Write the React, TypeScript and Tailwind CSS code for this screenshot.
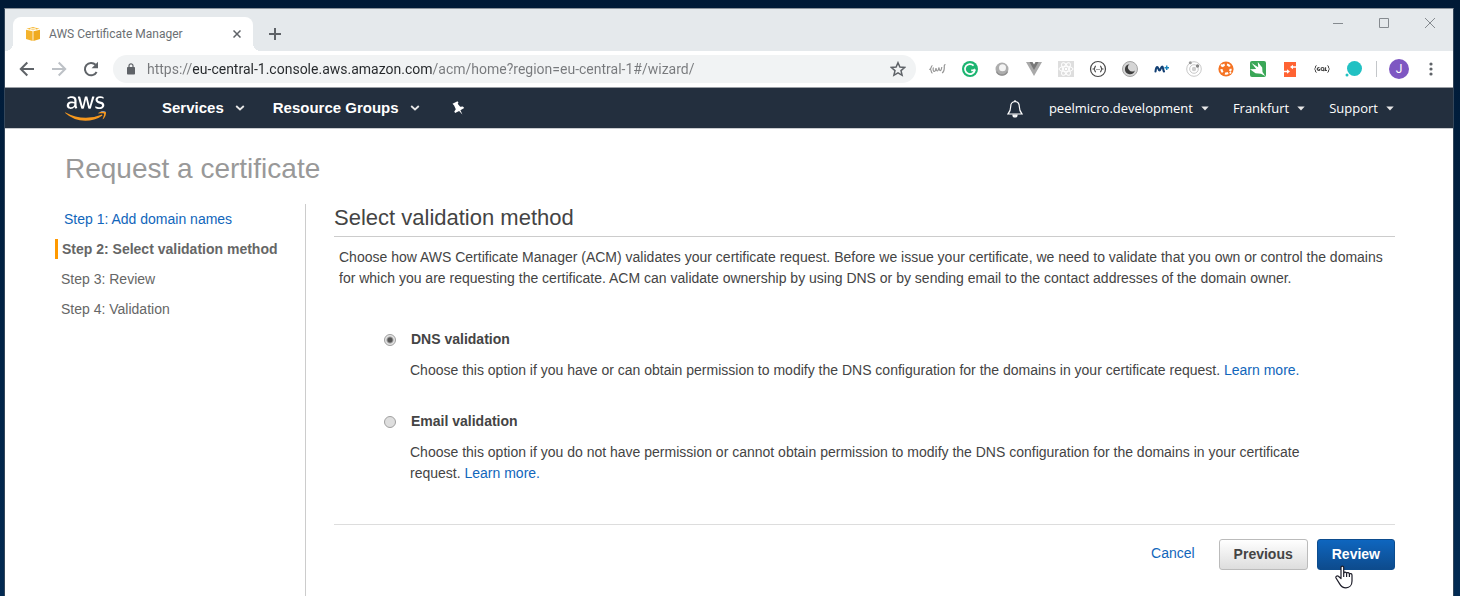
import React, { useState } from "react";
import { FaAws } from "react-icons/fa6";

type Ext = { name: string; art: React.ReactNode };

const extensions: Ext[] = [
  {
    name: "Emmet",
    art: (
      <g fill="none" stroke="#979797" strokeWidth="1.200">
        <path d="M3.500 5.500c-1.800.4-.6 3-2.500 3.700 1.900.3.500 3.500 2.500 4M16.500 4.500c-1.800 0-1 2.500-1.300 4.500-.3 2-.5 3.500-2.200 3.800" />
        <path d="M4.500 7.500c-.8 1.500-.3 4 .8 4s1.500-2 1.700-3.500c.3 2 .6 3 1.400 3s1.100-2 1.600-3.500c.2 2 .5 3.200 1.300 3.200s1.200-1.500 1.500-3.700" />
      </g>
    ),
  },
  {
    name: "Grammarly",
    art: (
      <>
        <circle cx="9" cy="9" r="8" fill="#1cb571" />
        <path d="M12.600 5.600A5 5 0 1 0 13.800 10.400H10.200" fill="none" stroke="#fff" strokeWidth="1.700" />
        <path d="M13.800 8.200v4.200l-2.400-2z" fill="#fff" />
      </>
    ),
  },
  {
    name: "Lens",
    art: (
      <>
        <circle cx="9" cy="9" r="6.500" fill="#adadad" />
        <path d="M3.500 11.500a6 6 0 0 0 11 0" fill="none" stroke="#8e8e8e" strokeWidth="1.500" />
        <circle cx="9.500" cy="7.800" r="3.500" fill="#f4f4f4" />
      </>
    ),
  },
  {
    name: "Vue devtools",
    art: (
      <>
        <path d="M1 2h4.500L9 8l3.500-6H17L9 16z" fill="#a9a9a9" />
        <path d="M4.500 2h3L9 4.600 10.500 2h3L9 10z" fill="#777" />
      </>
    ),
  },
  {
    name: "React devtools",
    art: (
      <>
        <rect x="1" y="1" width="16" height="16" fill="#dedede" />
        <g fill="none" stroke="#fff" strokeWidth="1">
          <ellipse cx="9" cy="9" rx="7" ry="2.700" />
          <ellipse cx="9" cy="9" rx="7" ry="2.700" transform="rotate(60 9 9)" />
          <ellipse cx="9" cy="9" rx="7" ry="2.700" transform="rotate(120 9 9)" />
        </g>
        <circle cx="9" cy="9" r="1.200" fill="#fff" />
      </>
    ),
  },
  {
    name: "JSON viewer",
    art: (
      <g fill="none" stroke="#4a4a4a">
        <circle cx="9" cy="9" r="7.500" strokeWidth="1.200" />
        <path d="M7 6c-1.800 0-.5 2.500-2.300 3C6.500 9.500 5.200 12 7 12M11 6c1.800 0 .5 2.500 2.300 3-1.800.5-.5 3-2.300 3" strokeWidth="1.200" />
        <path d="M7.500 9.500h3" strokeWidth="1" strokeDasharray="1 1" />
      </g>
    ),
  },
  {
    name: "Dark mode",
    art: (
      <>
        <circle cx="9" cy="9" r="7.500" fill="#d5d5d5" stroke="#a5a5a5" />
        <path d="M8.500 4.200a5 5 0 1 0 5.300 6.200A4 4 0 0 1 8.500 4.200z" fill="#3d3d3d" />
      </>
    ),
  },
  {
    name: "Movistar",
    art: (
      <>
        <path d="M2.500 11.500c.3-2.600 1-4.500 1.800-4.500.9 0 1.200 3.500 2.200 3.500S8 6.500 9.200 6.500s.6 3.500 1.800 5" fill="none" stroke="#123f73" strokeWidth="2.100" strokeLinecap="round" />
        <path d="M13.700 5.500v4.500M11.500 7.700H16" stroke="#1b86bd" strokeWidth="1.500" />
      </>
    ),
  },
  {
    name: "Orbit",
    art: (
      <>
        <g fill="none" stroke="#c9c9c9">
          <circle cx="9" cy="9" r="7.300" />
          <circle cx="9" cy="9" r="4.300" />
        </g>
        <circle cx="9" cy="9" r="2.200" fill="#cfcfcf" />
        <circle cx="12.500" cy="6" r="1.700" fill="#858585" />
        <circle cx="5.300" cy="2.800" r="1.500" fill="#999" />
      </>
    ),
  },
  {
    name: "Hub",
    art: (
      <>
        <circle cx="9" cy="9" r="7.600" fill="#f57323" />
        <circle cx="9" cy="9" r="4.600" fill="none" stroke="#fff" strokeWidth="2.200" strokeDasharray="3.400 2.380" strokeDashoffset="1" />
        <circle cx="4.600" cy="5.300" r="1" fill="#fff" />
        <circle cx="13.400" cy="12.700" r="1" fill="#fff" />
      </>
    ),
  },
  {
    name: "Swift",
    art: (
      <>
        <rect x="1" y="1" width="16" height="16" rx="2" fill="#3aa757" />
        <path d="M1 9.300l6.200-.4L2.500 3l6.700 4.300L8.800 2l4.400 5.500.3 4.500 2.700 4-4.200-2.300-5.500-.4z" fill="#fff" />
      </>
    ),
  },
  {
    name: "Switcher",
    art: (
      <>
        <rect x="3" y="2" width="12" height="15" fill="#ff6333" />
        <path d="M3 11.500h4M15 7h-4" stroke="#fff" strokeWidth="1.300" />
        <path d="M6 9.200l3 2.300-3 2.300zM12 4.700L9 7l3 2.300z" fill="#fff" />
      </>
    ),
  },
  {
    name: "GraphQL",
    art: (
      <g fill="none" stroke="#444" strokeWidth="1">
        <path d="M3.500 5.500c-1.700 0-.3 3-2 3.500 1.700.5.300 3.500 2 3.500M14.500 5.500c1.700 0 .3 3 2 3.500-1.700.5-.3 3.500-2 3.500" />
        <path d="M6.500 7.800c-3-1-3 3.400 0 2.400V9M12.500 7.200v3.300h1.500M10.300 10l1 1" strokeWidth="1.200" />
        <circle cx="9.500" cy="9" r="1.500" strokeWidth="1.200" />
      </g>
    ),
  },
  {
    name: "Chat bubble",
    art: (
      <g fill="#22c1c3">
        <circle cx="9.500" cy="8.500" r="7.500" />
        <circle cx="2" cy="15" r="1.500" />
      </g>
    ),
  },
];

const Caret = ({ wide = false }: { wide?: boolean }) =>
  wide ? (
    <svg viewBox="0 0 10 6" className="h-[6px] w-[10px]" fill="none" stroke="#e8e8e8" strokeWidth="1.800">
      <path d="M1.200 1L5 4.500 8.800 1" />
    </svg>
  ) : (
    <svg viewBox="0 0 8 5" className="h-[5px] w-2" fill="#e8e8e8">
      <path d="M.3.500h7.400L4 4.500z" />
    </svg>
  );

const IconButton = ({ label, children }: { label: string; children: React.ReactNode }) => (
  <button aria-label={label} className="flex h-8 w-8 shrink-0 items-center justify-center">
    {children}
  </button>
);

function TabStrip() {
  return (
    <div className="flex h-[42px] items-end justify-between bg-[#e5e9ec]">
      <div className="flex items-end">
        <span className="h-2 w-2 bg-[radial-gradient(circle_at_0_0,#e5e9ec_8px,#fff_8px)]" />
        <div className="flex h-[34px] w-60 items-center rounded-t-lg bg-white pr-3 pl-3">
          <svg viewBox="0 0 16 16" className="h-4 w-4 shrink-0">
            <path d="M1 3.800l6.600 1.400V15L1 13z" fill="#f4b32c" />
            <path d="M15 3.800L8.400 5.200V15L15 13z" fill="#efaa20" />
            <path d="M1.500 2.800L8 1l6.500 1.800L8 4.300z" fill="#f6b833" />
            <path d="M5 2l6 1.700M11 2L5 3.700" stroke="#fff" strokeWidth=".7" />
          </svg>
          <span className="ml-2 flex-1 font-[Roboto,'Noto_Sans',sans-serif] text-xs whitespace-nowrap text-[#6b6f73]">
            AWS Certificate Manager
          </span>
          <button aria-label="Close tab">
            <svg viewBox="0 0 8 8" className="h-2 w-2" stroke="#5f6368" strokeWidth="1.500">
              <path d="M.5.500l7 7M7.500.500l-7 7" />
            </svg>
          </button>
        </div>
        <span className="h-2 w-2 bg-[radial-gradient(circle_at_100%_0,#e5e9ec_8px,#fff_8px)]" />
        <button aria-label="New tab" className="flex h-[34px] w-7 items-center justify-center">
          <svg viewBox="0 0 12 12" className="h-3 w-3" stroke="#5f6368" strokeWidth="2">
            <path d="M6 0v12M0 6h12" />
          </svg>
        </button>
      </div>
      <div className="flex self-start pt-[9px] pr-[18px] text-[#858a8f]">
        <button aria-label="Minimize" className="mr-9">
          <svg viewBox="0 0 10 10" className="h-[10px] w-[10px]" stroke="currentColor"><path d="M0 5.500h10" /></svg>
        </button>
        <button aria-label="Maximize" className="mr-9">
          <svg viewBox="0 0 10 10" className="h-[10px] w-[10px]" fill="none" stroke="currentColor"><path d="M.5.500h9v9h-9z" /></svg>
        </button>
        <button aria-label="Close window">
          <svg viewBox="0 0 10 10" className="h-[10px] w-[10px]" stroke="currentColor"><path d="M0 0l10 10M10 0L0 10" /></svg>
        </button>
      </div>
    </div>
  );
}

function Toolbar() {
  return (
    <div className="flex h-[37px] items-center border-b border-[#9b9fa5] bg-white px-1.5">
      <IconButton label="Back">
        <svg viewBox="0 0 16 16" className="h-4 w-4" fill="none" stroke="#5f6368" strokeWidth="2"><path d="M15 8H2M8.300 1.500L1.800 8l6.500 6.500" /></svg>
      </IconButton>
      <IconButton label="Forward">
        <svg viewBox="0 0 16 16" className="h-4 w-4" fill="none" stroke="#bdc1c6" strokeWidth="2"><path d="M1 8h13M7.700 1.500L14.200 8l-6.500 6.500" /></svg>
      </IconButton>
      <IconButton label="Reload">
        <svg viewBox="0 0 16 16" className="h-4 w-4">
          <path d="M13.600 11A6.200 6.200 0 1 1 12.600 3.800" fill="none" stroke="#5f6368" strokeWidth="2" />
          <path d="M15 .8v6.400H8.600z" fill="#5f6368" />
        </svg>
      </IconButton>
      <div className="ml-1.5 flex h-7 flex-1 items-center rounded-full bg-[#f1f3f4] pr-2.5 pl-3.5">
        <svg viewBox="0 0 8 12" className="h-3 w-2">
          <rect y="4" width="8" height="7.500" rx=".8" fill="#5f6368" />
          <path d="M2 4.500V2.800a2 2 0 0 1 4 0v1.700" fill="none" stroke="#5f6368" strokeWidth="1.200" />
        </svg>
        <input
          aria-label="Address"
          readOnly
          value="https://eu-central-1.console.aws.amazon.com/acm/home?region=eu-central-1#/wizard/"
          className="ml-3 min-w-0 flex-1 bg-[linear-gradient(90deg,#77797c_45px,#25282b_45px,#25282b_285px,#77797c_285px)] bg-clip-text font-[Roboto,'Noto_Sans',sans-serif] text-sm text-transparent outline-none"
        />
        <button aria-label="Bookmark this page">
          <svg viewBox="0 0 16 16" className="h-4 w-4" fill="none" stroke="#5f6368" strokeWidth="1.500">
            <path d="M8 1.700l1.900 4.400 4.700.4-3.600 3.100 1.100 4.700L8 11.800l-4.100 2.500L5 9.600 1.400 6.500l4.700-.4z" />
          </svg>
        </button>
      </div>
      <div className="ml-1.5 flex items-center">
        {extensions.map((e) => (
          <IconButton key={e.name} label={e.name}>
            <svg viewBox="0 0 18 18" className="h-[18px] w-[18px]">{e.art}</svg>
          </IconButton>
        ))}
      </div>
      <span className="mx-1.5 h-4 w-px bg-[#c4c7ca]" />
      <IconButton label="Profile">
        <span className="flex h-5 w-5 items-center justify-center rounded-full bg-[#7e57c2] font-[Roboto,sans-serif] text-xs text-white">J</span>
      </IconButton>
      <IconButton label="Menu">
        <svg viewBox="0 0 4 14" className="h-[14px] w-1" fill="#5f6368">
          <circle cx="2" cy="2" r="1.600" />
          <circle cx="2" cy="7" r="1.600" />
          <circle cx="2" cy="12" r="1.600" />
        </svg>
      </IconButton>
    </div>
  );
}

function ConsoleNav() {
  return (
    <nav className="flex h-[41px] items-center justify-between border-b border-[#c9cbce] bg-[#232f3e] pr-[59px] pl-[60px] text-white">
      <div className="flex items-center text-[15px] font-bold">
        <svg className="absolute h-0 w-0" aria-hidden="true">
          <linearGradient id="aws-fill" gradientUnits="userSpaceOnUse" x1="0" y1="0" x2="0" y2="512">
            <stop offset=".62" stopColor="#fff" />
            <stop offset=".62" stopColor="#f7981d" />
          </linearGradient>
        </svg>
        <a href="#home" aria-label="AWS">
          <FaAws className="h-[33px] w-[41px]" fill="url(#aws-fill)" stroke="none" />
        </a>
        <button className="ml-14 flex items-center gap-[11px]">Services <Caret wide /></button>
        <button className="ml-7 flex items-center gap-[11px]">Resource Groups <Caret wide /></button>
        <button aria-label="Pin shortcuts" className="ml-[31px]">
          <svg viewBox="0 0 14 14" className="h-[14px] w-[14px]" fill="#fff">
            <path d="M1.500 2.800L6.500.3l1 1.500-.8.900 2.500 3 2.700-.3 1.300 1.700-3.800 2.200 2 4.200-3.300-3.500-4 2-.8-1.600 1.500-2.100-1.700-3.700z" />
          </svg>
        </button>
      </div>
      <div className="flex items-center pt-px font-['Open_Sans','Noto_Sans',sans-serif] text-[13px]">
        <button aria-label="Notifications" className="mr-[26px]">
          <svg viewBox="0 0 16 18" className="h-[18px] w-4" fill="none" stroke="#fff" strokeWidth="1.200">
            <path d="M8 1.500c-3 .3-4.300 2.500-4.300 5 0 4-1 5.500-2.700 7.500h14c-1.700-2-2.700-3.500-2.700-7.500 0-2.500-1.300-4.700-4.300-5z" />
            <path d="M6 15.200a2 1.800 0 0 0 4 0z" fill="#fff" />
            <path d="M8 0v2" />
          </svg>
        </button>
        <button className="flex items-center gap-2">peelmicro.development <Caret /></button>
        <button className="ml-6 flex items-center gap-2">Frankfurt <Caret /></button>
        <button className="ml-6 flex items-center gap-2">Support <Caret /></button>
      </div>
    </nav>
  );
}

type OptionProps = {
  id: string;
  title: string;
  text: string;
  checked: boolean;
  onSelect: () => void;
};

function ValidationOption({ id, title, text, checked, onSelect }: OptionProps) {
  return (
    <div className="leading-[21px]">
      <div className="flex items-center">
        <input
          type="radio"
          id={id}
          name="validation"
          checked={checked}
          onChange={onSelect}
          className="h-3 w-3 appearance-none rounded-full border border-[#a0a0a0] bg-[#dedede] checked:bg-[radial-gradient(circle,#555_2px,#e4e4e4_4px)]"
        />
        <label htmlFor={id} className="ml-[15px] font-bold">{title}</label>
      </div>
      <p className="mt-2.5 pl-[26px]">
        {text}{" "}
        <a href="#learn" className="text-[#1166bb]">Learn more.</a>
      </p>
    </div>
  );
}

function Wizard() {
  const [method, setMethod] = useState("dns");
  return (
    <div className="flex flex-1 flex-col bg-white text-sm text-[#444]">
      <h1 className="mb-[19px] pt-6 pl-[60px] text-[28px] leading-8 text-[#999]">Request a certificate</h1>
      <div className="flex flex-1">
        <ol className="w-[300px] shrink-0 pl-[50px] leading-5 text-[#666]">
          <li className="py-[5px] pl-[9px]"><a href="#step1" className="text-[#1166bb]">Step 1: Add domain names</a></li>
          <li className="py-[5px]"><div className="border-l-3 border-[#ff9900] pl-1 font-bold">Step 2: Select validation method</div></li>
          <li className="py-[5px] pl-1.5">Step 3: Review</li>
          <li className="py-[5px] pl-1.5">Step 4: Validation</li>
        </ol>
        <main className="flex-1 border-l border-[#ccc] pr-[58px] pl-7">
          <h2 className="border-b border-[#ccc] pb-1 text-[22px] leading-7">Select validation method</h2>
          <p className="mt-2.5 pl-[5px] leading-[21px]">
            Choose how AWS Certificate Manager (ACM) validates your certificate request. Before we issue your certificate, we need to validate that you own or control the domains for which you are requesting the certificate. ACM can validate ownership by using DNS or by sending email to the contact addresses of the domain owner.
          </p>
          <form className="mt-10 flex flex-col gap-[30px] pr-[60px] pl-[50px]">
            <ValidationOption
              id="dns"
              title="DNS validation"
              text="Choose this option if you have or can obtain permission to modify the DNS configuration for the domains in your certificate request."
              checked={method === "dns"}
              onSelect={() => setMethod("dns")}
            />
            <ValidationOption
              id="email"
              title="Email validation"
              text="Choose this option if you do not have permission or cannot obtain permission to modify the DNS configuration for the domains in your certificate request."
              checked={method === "email"}
              onSelect={() => setMethod("email")}
            />
          </form>
          <div className="mt-10 flex items-start justify-end border-t border-[#ddd] pt-3.5">
            <a href="#cancel" className="mr-6 leading-7 text-[#1166bb]">Cancel</a>
            <button className="mr-[9px] h-[31px] rounded-[3px] border border-[#bbb] bg-linear-to-b from-white to-[#ddd] px-3.5 pb-px font-bold">Previous</button>
            <div className="relative flex">
              <button className="h-[31px] rounded-[3px] border border-[#0c4c8e] bg-linear-to-b from-[#0e66bf] to-[#0d4b8d] px-3.5 pb-px font-bold text-white">Review</button>
              <svg viewBox="0 0 18 24" className="absolute top-[26px] left-[18px] h-6 w-[18px]" fill="#fff" stroke="#1c1c28" strokeWidth="1.200" strokeLinejoin="round">
                <path d="M6 13.500V2.500a1.300 1.300 0 0 1 2.700 0V8c.3-1.200 2.600-1.200 2.900.3.500-1 2.500-.8 2.800.6.700-.7 2.600-.4 2.600 1.300V16c0 4-2.500 6.800-6 6.800-3.300 0-5-1.500-6.500-4.200L1 13c-.6-1.500 1-2.800 2.400-1.700z" />
                <path d="M8.700 8v4M11.600 8.500V12M14.400 9v3" fill="none" />
              </svg>
            </div>
          </div>
        </main>
      </div>
    </div>
  );
}

export default function App() {
  return (
    <div className="flex min-h-screen bg-linear-to-b from-[#001a36] to-[#022a52] pt-2 pr-1.5 pl-1 font-['Liberation_Sans',Arial,sans-serif]">
      <div className="flex flex-1 flex-col border-x border-t border-x-[#33465a] border-t-[#8b939b]">
        <TabStrip />
        <Toolbar />
        <ConsoleNav />
        <Wizard />
      </div>
    </div>
  );
}
